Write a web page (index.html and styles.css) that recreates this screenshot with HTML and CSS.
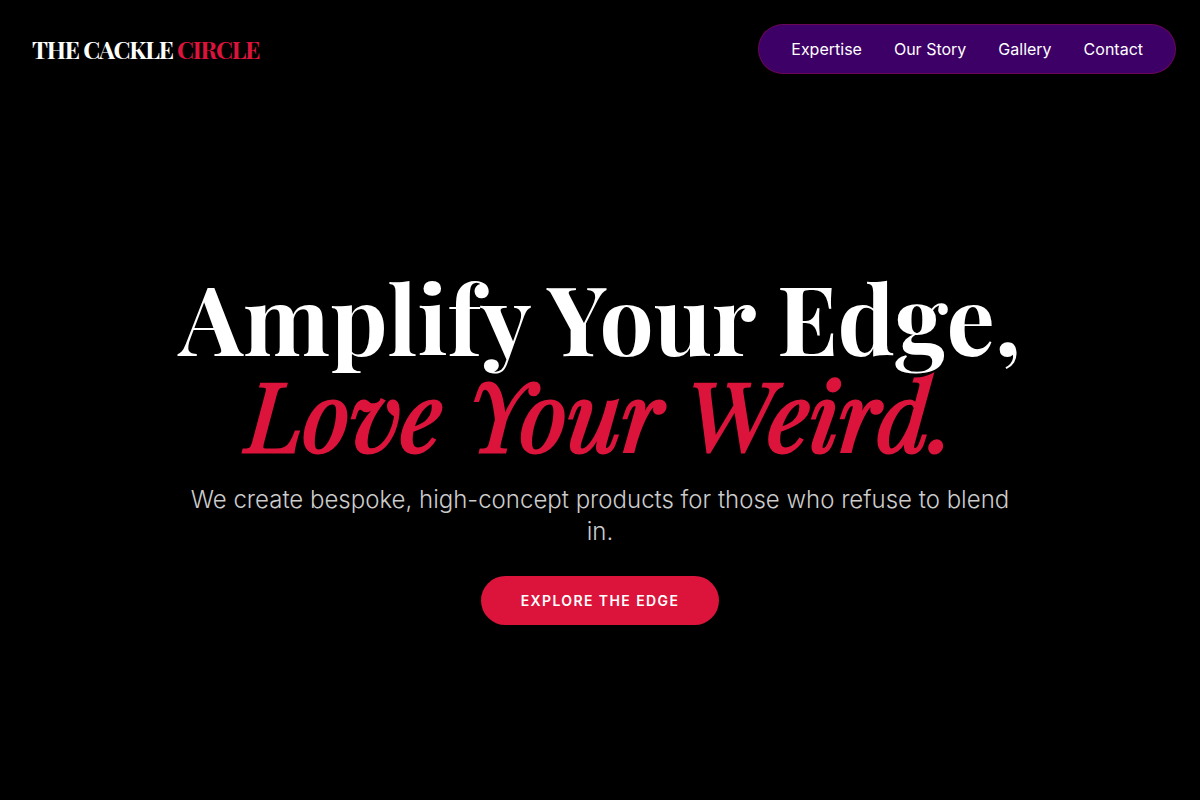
FILE: index.html
```html
<!DOCTYPE html>
<html lang="en">
<head>
<meta charset="utf-8">
<meta name="viewport" content="width=device-width, initial-scale=1">
<title>The Cackle Circle</title>
<link rel="stylesheet" href="styles.css">
</head>
<body>
<header class="header">
  <a class="logo" href="#">THE CACKLE <span class="accent">CIRCLE</span></a>
  <nav class="nav">
    <a href="#expertise">Expertise</a>
    <a href="#story">Our Story</a>
    <a href="#gallery">Gallery</a>
    <a href="#contact">Contact</a>
  </nav>
</header>
<main class="hero">
  <h1 class="title">Amplify Your Edge,<br><em class="tagline">Love Your Weird.</em></h1>
  <p class="lead">We create bespoke, high-concept products for those who refuse to blend in.</p>
  <a class="cta" href="#expertise">EXPLORE THE EDGE</a>
</main>
</body>
</html>
```
FILE: styles.css
```css
* { box-sizing: border-box; margin: 0; }
body {
  min-height: 100vh;
  display: flex;
  flex-direction: column;
  background: #000;
  color: #fff;
  font-family: Inter, sans-serif;
}
a { color: inherit; text-decoration: none; }
.accent { color: #dc143c; }
.header {
  display: flex;
  justify-content: space-between;
  align-items: center;
  padding: 24px 24px 18px 32px;
}
.logo {
  font: 700 24px/32px "Playfair Display", "Liberation Serif", serif;
  letter-spacing: -0.05em;
}
.nav {
  display: flex;
  gap: 32px;
  padding: 12px 32px;
  border: 1px solid rgba(220, 20, 60, 0.3);
  border-radius: 25px;
  background: #3d0066;
  font-size: 16px;
  line-height: 24px;
}
.hero {
  flex: 1;
  display: flex;
  flex-direction: column;
  align-items: center;
  justify-content: center;
  padding: 0 24px;
  text-align: center;
}
.title {
  font: 700 96px/96px "Playfair Display", "Liberation Serif", serif;
}
.tagline {
  color: #dc143c;
  font-weight: 400;
  -webkit-text-stroke: 3px #dc143c;
}
.lead {
  max-width: 848px;
  margin: 24px 0 28px;
  color: #ccc;
  font-size: 24px;
  font-weight: 300;
  line-height: 32px;
}
.cta {
  padding: 14px 40px;
  border-radius: 25px;
  background: #dc143c;
  font-size: 14px;
  font-weight: 600;
  line-height: 21px;
  letter-spacing: 0.1em;
}
```
